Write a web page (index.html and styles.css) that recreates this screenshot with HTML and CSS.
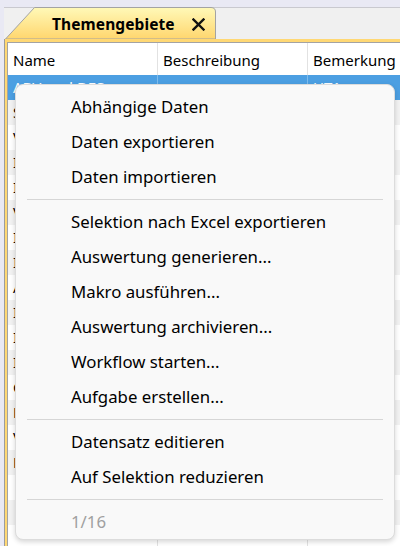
FILE: index.html
```html
<!DOCTYPE html>
<html lang="de">
<head>
<meta charset="utf-8">
<title>Themengebiete</title>
<link rel="stylesheet" href="styles.css">
</head>
<body>
<div class="window">
  <div class="tabstrip">
    <div class="tab">
      <svg class="tab-shape" width="213" height="32" viewBox="0 0 213 32">
        <defs>
          <linearGradient id="tabfill" x1="0" y1="0" x2="0" y2="1">
            <stop offset="0" stop-color="#fff9b8"/>
            <stop offset="1" stop-color="#ffd66e"/>
          </linearGradient>
        </defs>
        <path d="M1.5,32 L30.5,0.5 H207 Q211.5,0.5 211.5,5 V32 Z" fill="url(#tabfill)" stroke="#a3a3a3" stroke-width="1"/>
      </svg>
      <span class="tab-title">Themengebiete</span>
      <svg class="tab-close" width="13" height="13" viewBox="0 0 13 13">
        <path d="M1.5,1.5 L11.5,11.5 M11.5,1.5 L1.5,11.5" stroke="#111" stroke-width="2.4" stroke-linecap="square"/>
      </svg>
    </div>
  </div>
  <div class="panel">
    <div class="grid">
      <div class="row head">
        <div class="cell">Name</div>
        <div class="cell">Beschreibung</div>
        <div class="cell">Bemerkung</div>
      </div>
      <div class="row selected">
        <div class="cell">ABV und DES</div>
        <div class="cell"></div>
        <div class="cell">UT1</div>
      </div>
      <div class="row"><div class="cell">Stammdaten</div><div class="cell"></div><div class="cell"></div></div>
      <div class="row"><div class="cell">Verträge</div><div class="cell"></div><div class="cell"></div></div>
      <div class="row"><div class="cell">Inventar</div><div class="cell"></div><div class="cell"></div></div>
      <div class="row"><div class="cell">Instandhaltung</div><div class="cell"></div><div class="cell"></div></div>
      <div class="row"><div class="cell">Vermietung</div><div class="cell"></div><div class="cell"></div></div>
      <div class="row"><div class="cell">Immobilien</div><div class="cell"></div><div class="cell"></div></div>
      <div class="row"><div class="cell">Investitionen</div><div class="cell"></div><div class="cell"></div></div>
      <div class="row"><div class="cell">Anlagen</div><div class="cell"></div><div class="cell"></div></div>
      <div class="row"><div class="cell">Infrastruktur</div><div class="cell"></div><div class="cell"></div></div>
      <div class="row"><div class="cell">IT-Systeme</div><div class="cell"></div><div class="cell"></div></div>
      <div class="row"><div class="cell">Inspektionen</div><div class="cell"></div><div class="cell"></div></div>
      <div class="row"><div class="cell">Controlling</div><div class="cell"></div><div class="cell"></div></div>
      <div class="row"><div class="cell">Lizenzen</div><div class="cell"></div><div class="cell"></div></div>
      <div class="row"><div class="cell">Verwaltung</div><div class="cell"></div><div class="cell"></div></div>
      <div class="row"><div class="cell">Lager</div><div class="cell"></div><div class="cell"></div></div>
      <div class="row"><div class="cell"></div><div class="cell"></div><div class="cell"></div></div>
      <div class="row"><div class="cell"></div><div class="cell"></div><div class="cell"></div></div>
      <div class="row"><div class="cell"></div><div class="cell"></div><div class="cell"></div></div>
    </div>
  </div>
</div>

<div class="menu">
  <div class="item">Abhängige Daten</div>
  <div class="item">Daten exportieren</div>
  <div class="item">Daten importieren</div>
  <div class="sep"></div>
  <div class="item">Selektion nach Excel exportieren</div>
  <div class="item">Auswertung generieren...</div>
  <div class="item">Makro ausführen...</div>
  <div class="item">Auswertung archivieren...</div>
  <div class="item">Workflow starten...</div>
  <div class="item">Aufgabe erstellen...</div>
  <div class="sep"></div>
  <div class="item">Datensatz editieren</div>
  <div class="item">Auf Selektion reduzieren</div>
  <div class="sep"></div>
  <div class="item disabled">1/16</div>
</div>
</body>
</html>
```

FILE: styles.css
```css
html, body {
  margin: 0;
  padding: 0;
}

body {
  width: 400px;
  height: 546px;
  overflow: hidden;
  background: #e9e9f4;
  font-family: "Noto Sans", "Open Sans", sans-serif;
  font-size: 15px;
  color: #000;
  position: relative;
}

/* outer document window, leaves a lavender strip on the left */
.window {
  margin: 7px 0 0 4px;
}

/* tab strip */
.tabstrip {
  height: 31px;
  background: #f0f0f0;
  border-top: 1px solid #c9c9cf;
  display: flex;
  align-items: flex-end;
}

.tab {
  position: relative;
  width: 213px;
  height: 31px;
  display: flex;
  align-items: center;
  flex-shrink: 0;
}

.tab-shape {
  position: absolute;
  left: 0;
  top: -1px;
}

.tab-title {
  position: relative;
  margin-left: 48px;
  font-weight: 700;
  font-size: 15.5px;
  letter-spacing: 0.1px;
  padding-top: 1px;
}

.tab-close {
  position: relative;
  margin-left: 17px;
  margin-top: 2px;
}

/* yellow frame around the data grid */
.panel {
  border-left: 1px solid #9c9c9c;
  background: #ffd874;
  padding: 3px 0 0 2px;
}

.grid {
  background: #fff;
  border-left: 1px solid #a3a3a3;
  border-top: 1px solid #a3a3a3;
  height: 520px;
  overflow: hidden;
}

.row {
  display: grid;
  grid-template-columns: 150px 150px 1fr;
  height: 25px;
  line-height: 25px;
  white-space: nowrap;
}

.row:nth-child(odd) {
  background: #f2f2f2;
}

.row.head {
  height: 32px;
  line-height: 34px;
  background: #fff;
}

.row.selected {
  background: #4c9fe2;
  color: #fff;
}

.cell {
  padding-left: 5px;
  overflow: hidden;
  border-right: 1px solid #e2e2e2;
}

.row.selected .cell {
  border-right-color: #7fbcec;
}

.cell:last-child {
  border-right: none;
}

/* context menu */
.menu {
  position: absolute;
  left: 15px;
  top: 84px;
  width: 378px;
  padding: 4px 0 0;
  background: #f9f9f9;
  border: 1px solid #dcdcdc;
  border-radius: 8px;
  box-shadow: 0 2px 5px rgba(0, 0, 0, 0.16);
  font-size: 16.8px;
}

.item {
  height: 35px;
  line-height: 35px;
  padding-left: 55px;
  white-space: nowrap;
}

.item.disabled {
  color: #a0a0a0;
}

.sep {
  height: 1px;
  margin: 5px 11px 4px;
  background: #d6d6d6;
}
```
